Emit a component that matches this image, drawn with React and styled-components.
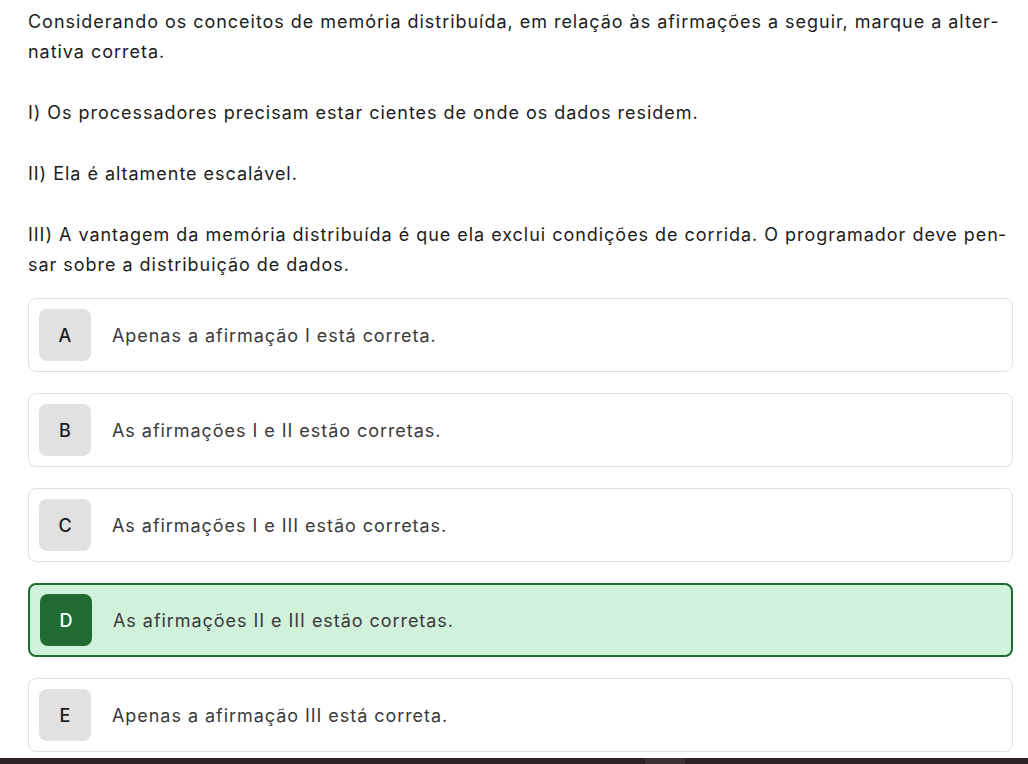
import React from "react";
import styled, { createGlobalStyle } from "styled-components";

const GlobalStyle = createGlobalStyle`
  body {
    margin: 0;
    background: #ffffff;
    font-family: Inter, "Noto Sans", sans-serif;
  }
`;

const Page = styled.div`
  width: 1028px;
  height: 764px;
  overflow: hidden;
  display: flex;
  flex-direction: column;
`;

const Content = styled.div`
  padding: 7px 15px 0 28px;
  flex: 1;
`;

const Statement = styled.p`
  margin: 0 0 31px 0;
  font-size: 18px;
  line-height: 30px;
  letter-spacing: 0.97px;
  color: #1c1c1c;
  hyphens: manual;
`;

const Options = styled.div`
  display: flex;
  flex-direction: column;
  gap: 21px;
  margin-top: -13px;
`;

const Option = styled.div`
  display: flex;
  align-items: center;
  gap: 21px;
  height: 74px;
  box-sizing: border-box;
  padding: 0 10px;
  border: ${(p) => (p.$correct ? "2px solid #1f6b31" : "1px solid #e0e0e0")};
  border-radius: 8px;
  background: ${(p) => (p.$correct ? "#d0f1da" : "#ffffff")};
`;

const Letter = styled.div`
  width: 52px;
  height: 52px;
  flex-shrink: 0;
  border-radius: 8px;
  display: flex;
  align-items: center;
  justify-content: center;
  font-size: 18px;
  font-weight: 500;
  background: ${(p) => (p.$correct ? "#1f6b31" : "#e1e1e1")};
  color: ${(p) => (p.$correct ? "#ffffff" : "#1c1c1c")};
`;

const OptionText = styled.span`
  font-size: 18px;
  letter-spacing: 0.95px;
  color: #3a3a3a;
`;

const BottomBar = styled.div`
  height: 6px;
  background: #2d2228;
  display: flex;
  padding-left: 645px;
`;

const BarTab = styled.div`
  width: 40px;
  height: 6px;
  background: #3b3036;
`;

const options = [
  { letter: "A", text: "Apenas a afirmação I está correta." },
  { letter: "B", text: "As afirmações I e II estão corretas." },
  { letter: "C", text: "As afirmações I e III estão corretas." },
  { letter: "D", text: "As afirmações II e III estão corretas.", correct: true },
  { letter: "E", text: "Apenas a afirmação III está correta." },
];

export default function App() {
  return (
    <Page>
      <GlobalStyle />
      <Content>
        <Statement>
          Considerando os conceitos de memória distribuída, em relação às afirmações a seguir, marque a alter{"\u00AD"}nativa correta.
        </Statement>
        <Statement>I) Os processadores precisam estar cientes de onde os dados residem.</Statement>
        <Statement>II) Ela é altamente escalável.</Statement>
        <Statement>
          III) A vantagem da memória distribuída é que ela exclui condições de corrida. O programador deve pen{"\u00AD"}sar sobre a distribuição de dados.
        </Statement>
        <Options>
          {options.map((o) => (
            <Option key={o.letter} $correct={o.correct}>
              <Letter $correct={o.correct}>{o.letter}</Letter>
              <OptionText>{o.text}</OptionText>
            </Option>
          ))}
        </Options>
      </Content>
      <BottomBar>
        <BarTab />
      </BottomBar>
    </Page>
  );
}
